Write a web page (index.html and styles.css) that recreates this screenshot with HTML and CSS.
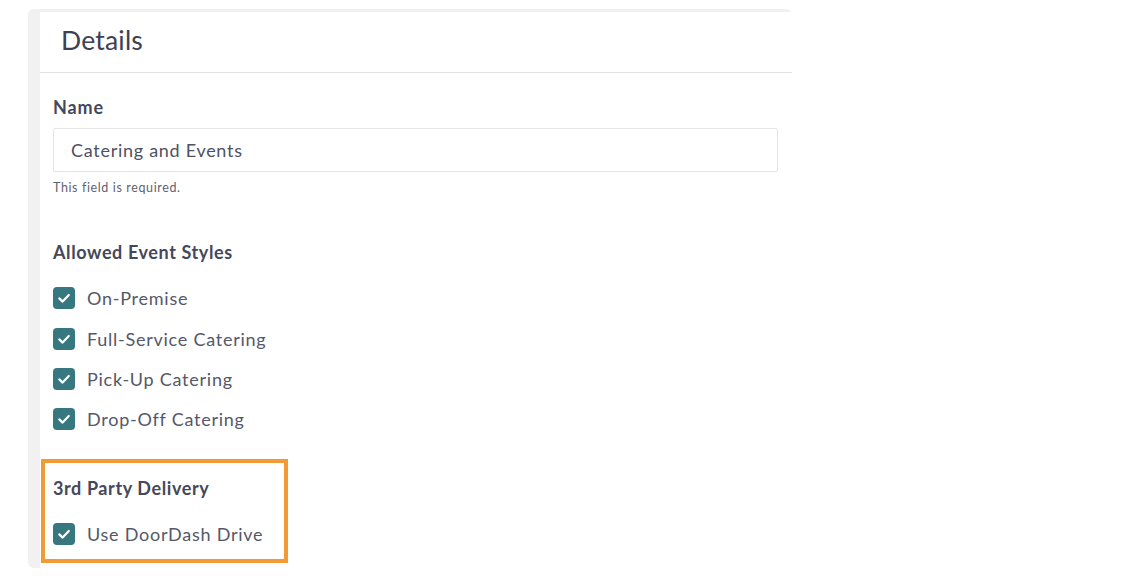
FILE: index.html
```html
<!DOCTYPE html>
<html lang="en">
<head>
<meta charset="utf-8">
<title>Details</title>
<link rel="stylesheet" href="styles.css">
</head>
<body>
<div class="frame">
  <div class="panel">
    <div class="panel-header"><h2 class="panel-title">Details</h2></div>
    <div class="panel-body">
      <label class="field-label" for="name">Name</label>
      <input class="text-input" id="name" type="text" value="Catering and Events">
      <div class="help-text">This field is required.</div>

      <div class="group-label group-events">Allowed Event Styles</div>
      <div class="check-list">
        <div class="check-row"><span class="check-box"><svg viewBox="0 0 22 22" width="22" height="22"><path d="M6.3 11.4 L9.6 14.6 L15.8 8" fill="none" stroke="#fff" stroke-width="2.2" stroke-linecap="round" stroke-linejoin="round"/></svg></span><span class="check-text">On-Premise</span></div>
        <div class="check-row"><span class="check-box"><svg viewBox="0 0 22 22" width="22" height="22"><path d="M6.3 11.4 L9.6 14.6 L15.8 8" fill="none" stroke="#fff" stroke-width="2.2" stroke-linecap="round" stroke-linejoin="round"/></svg></span><span class="check-text">Full-Service Catering</span></div>
        <div class="check-row"><span class="check-box"><svg viewBox="0 0 22 22" width="22" height="22"><path d="M6.3 11.4 L9.6 14.6 L15.8 8" fill="none" stroke="#fff" stroke-width="2.2" stroke-linecap="round" stroke-linejoin="round"/></svg></span><span class="check-text">Pick-Up Catering</span></div>
        <div class="check-row"><span class="check-box"><svg viewBox="0 0 22 22" width="22" height="22"><path d="M6.3 11.4 L9.6 14.6 L15.8 8" fill="none" stroke="#fff" stroke-width="2.2" stroke-linecap="round" stroke-linejoin="round"/></svg></span><span class="check-text">Drop-Off Catering</span></div>
      </div>

      <div class="highlight">
        <div class="group-label">3rd Party Delivery</div>
        <div class="check-row delivery-row"><span class="check-box"><svg viewBox="0 0 22 22" width="22" height="22"><path d="M6.3 11.4 L9.6 14.6 L15.8 8" fill="none" stroke="#fff" stroke-width="2.2" stroke-linecap="round" stroke-linejoin="round"/></svg></span><span class="check-text">Use DoorDash Drive</span></div>
      </div>
    </div>
  </div>
</div>
</body>
</html>
```
FILE: styles.css
```css
* { box-sizing: border-box; }
html, body { margin: 0; padding: 0; background: #fff; }
body { font-family: Lato, "Noto Sans", sans-serif; color: #4d5163; }

.frame {
  margin: 9px 0 0 28px;
  width: 764px;
  height: 559px;
  background: #f1f1f2;
  border-radius: 6px 6px 0 6px;
  padding: 3px 0 0 12px;
  overflow: hidden;
}
.panel { background: #fff; height: 100%; }

.panel-header {
  height: 61px;
  border-bottom: 1px solid #e2e2e4;
  padding: 0 0 4px 21px;
  display: flex;
  align-items: center;
}
.panel-title {
  margin: 0;
  font-size: 26.5px;
  font-weight: 400;
  color: #3d4154;
  line-height: 32px;
  letter-spacing: 0.2px;
}

.panel-body { padding: 0 13px; }

.field-label, .group-label {
  display: block;
  font-size: 18px;
  font-weight: 700;
  line-height: 20px;
  color: #44485a;
  letter-spacing: 0.6px;
}
.field-label { margin-top: 24px; letter-spacing: 0.9px; }

.text-input {
  display: block;
  margin-top: 11px;
  width: 725px;
  height: 44px;
  border: 1px solid #e4e4e6;
  border-radius: 2px;
  padding: 0 0 0 17px;
  font-family: inherit;
  font-size: 18px;
  letter-spacing: 0.72px;
  color: #4d5163;
  background: #fff;
  outline: none;
}

.help-text {
  margin-top: 9px;
  font-size: 12.5px;
  line-height: 14px;
  letter-spacing: 0.62px;
  color: #5f6270;
}

.group-events { margin-top: 47px; }

.check-list { margin-top: 16px; }
.check-row {
  height: 40.4px;
  display: flex;
  align-items: center;
}
.check-box {
  width: 22px;
  height: 22px;
  border-radius: 4px;
  background: #37777f;
  display: flex;
  flex: none;
}
.check-text {
  margin-left: 12px;
  font-size: 18px;
  letter-spacing: 0.75px;
  color: #545869;
}

.highlight {
  margin: 19px 0 0 -12px;
  width: 247px;
  border: 4px solid #f29a34;
  padding: 15px 0 5px 8px;
}
.delivery-row { margin-top: 16px; height: 40px; }
```
